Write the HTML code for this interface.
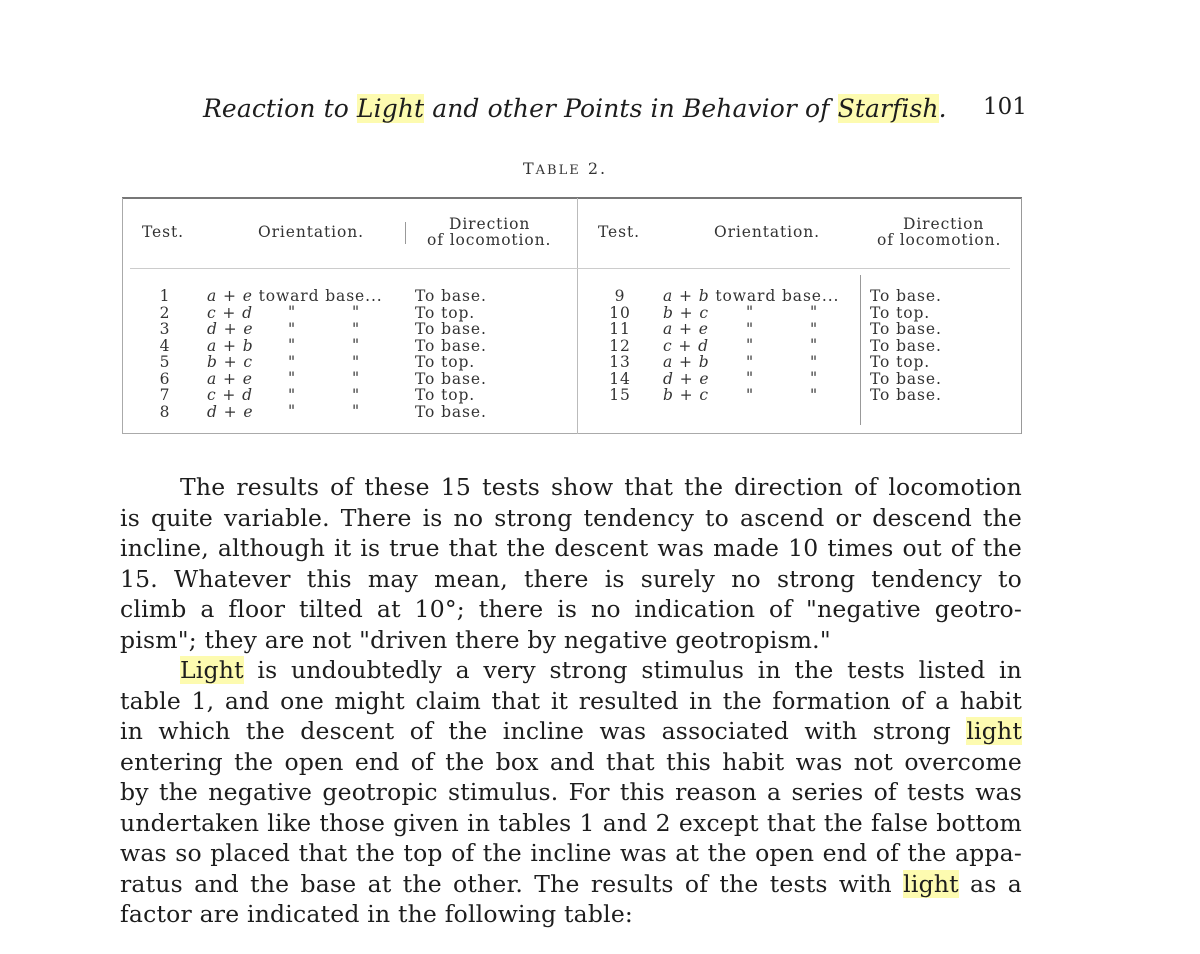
<!DOCTYPE html>
<html><head><meta charset="utf-8"><style>
body{margin:0;width:1200px;height:954px;background:#fff;position:relative;overflow:hidden;font-family:"DejaVu Serif",serif;color:#222}
.a{position:absolute;white-space:nowrap}
.hl{background:#fdfbb0}
.line{position:absolute;left:120px;width:902px;font-size:23.5px;letter-spacing:0.2px;line-height:30px;text-align:justify;text-align-last:justify;white-space:nowrap;color:#1d1d1d}
.t{position:absolute;font-size:15.5px;letter-spacing:0.9px;line-height:16.5px;white-space:nowrap;color:#333}
.vl{position:absolute;width:1px;background:#888}
.hr{position:absolute;height:1px;background:#888}
i{font-style:italic}
</style></head><body>
<div class="a" style="left:203px;top:94px;font-size:25px;font-style:italic;color:#1d1d1d;letter-spacing:0.1px">Reaction to <span class="hl">Light</span> and other Points in Behavior of <span class="hl">Starfish</span>.</div>
<div class="a" style="left:983px;top:94px;font-size:23px;color:#1d1d1d">101</div>
<div class="a" style="left:523px;top:159px;font-size:16px;letter-spacing:2px;color:#333">T<span style="font-size:13px">ABLE</span> 2.</div>

<div class="hr" style="left:122px;top:197px;width:900px;height:2px;background:#777"></div>
<div class="hr" style="left:122px;top:433px;width:900px;background:#aaa"></div>
<div class="vl" style="left:122px;top:198px;height:236px;background:#aaa"></div>
<div class="vl" style="left:1021px;top:198px;height:236px;background:#999"></div>
<div class="vl" style="left:577px;top:198px;height:236px;background:#bbb"></div>
<div class="vl" style="left:405px;top:222px;height:22px;background:#999"></div>
<div class="vl" style="left:860px;top:275px;height:150px;background:#999"></div>
<div class="hr" style="left:130px;top:268px;width:880px;background:#ccc"></div>

<div class="t" style="left:142px;top:224px">Test.</div>
<div class="t" style="left:258px;top:224px">Orientation.</div>
<div class="t" style="left:449px;top:216px;line-height:16px">Direction<br><span style="margin-left:-22px">of locomotion.</span></div>
<div class="t" style="left:598px;top:224px">Test.</div>
<div class="t" style="left:714px;top:224px">Orientation.</div>
<div class="t" style="left:903px;top:216px;line-height:16px">Direction<br><span style="margin-left:-26px">of locomotion.</span></div>

<div class="t" style="left:150px;top:288px;width:30px;text-align:center">1<br>2<br>3<br>4<br>5<br>6<br>7<br>8</div>
<div class="t" style="left:207px;top:288px"><i>a</i> + <i>e</i> toward base...<br><i>c</i> + <i>d</i><br><i>d</i> + <i>e</i><br><i>a</i> + <i>b</i><br><i>b</i> + <i>c</i><br><i>a</i> + <i>e</i><br><i>c</i> + <i>d</i><br><i>d</i> + <i>e</i></div>
<div class="t" style="left:288px;top:304px">"<br>"<br>"<br>"<br>"<br>"<br>"</div>
<div class="t" style="left:352px;top:304px">"<br>"<br>"<br>"<br>"<br>"<br>"</div>
<div class="t" style="left:415px;top:288px">To base.<br>To top.<br>To base.<br>To base.<br>To top.<br>To base.<br>To top.<br>To base.</div>

<div class="t" style="left:605px;top:288px;width:30px;text-align:center">9<br>10<br>11<br>12<br>13<br>14<br>15</div>
<div class="t" style="left:663px;top:288px"><i>a</i> + <i>b</i> toward base...<br><i>b</i> + <i>c</i><br><i>a</i> + <i>e</i><br><i>c</i> + <i>d</i><br><i>a</i> + <i>b</i><br><i>d</i> + <i>e</i><br><i>b</i> + <i>c</i></div>
<div class="t" style="left:746px;top:304px">"<br>"<br>"<br>"<br>"<br>"</div>
<div class="t" style="left:810px;top:304px">"<br>"<br>"<br>"<br>"<br>"</div>
<div class="t" style="left:870px;top:288px">To base.<br>To top.<br>To base.<br>To base.<br>To top.<br>To base.<br>To base.</div>

<div class="line" style="top:472px;left:180px;width:842px">The results of these 15 tests show that the direction of locomotion</div>
<div class="line" style="top:503px">is quite variable. There is no strong tendency to ascend or descend the</div>
<div class="line" style="top:533px">incline, although it is true that the descent was made 10 times out of the</div>
<div class="line" style="top:564px">15. Whatever this may mean, there is surely no strong tendency to</div>
<div class="line" style="top:594px">climb a floor tilted at 10°; there is no indication of "negative geotro-</div>
<div class="line" style="top:625px;text-align-last:left">pism"; they are not "driven there by negative geotropism."</div>
<div class="line" style="top:655px;left:180px;width:842px"><span class="hl">Light</span> is undoubtedly a very strong stimulus in the tests listed in</div>
<div class="line" style="top:686px">table 1, and one might claim that it resulted in the formation of a habit</div>
<div class="line" style="top:716px">in which the descent of the incline was associated with strong <span class="hl">light</span></div>
<div class="line" style="top:747px">entering the open end of the box and that this habit was not overcome</div>
<div class="line" style="top:777px">by the negative geotropic stimulus. For this reason a series of tests was</div>
<div class="line" style="top:808px">undertaken like those given in tables 1 and 2 except that the false bottom</div>
<div class="line" style="top:838px">was so placed that the top of the incline was at the open end of the appa-</div>
<div class="line" style="top:869px">ratus and the base at the other. The results of the tests with <span class="hl">light</span> as a</div>
<div class="line" style="top:899px;text-align-last:left">factor are indicated in the following table:</div>
</body></html>
